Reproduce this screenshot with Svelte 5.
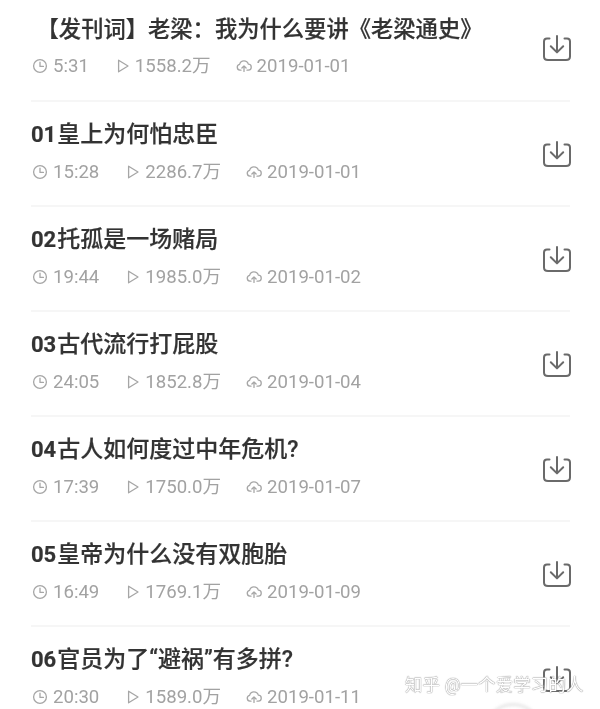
<script>
  const rows = [
    { num: '', title: ' 【发刊词】老梁：我为什么要讲《老梁通史》', dur: '5:31', plays: '1558.2万', date: '2019-01-01', first: true },
    { num: '01', title: '皇上为何怕忠臣', dur: '15:28', plays: '2286.7万', date: '2019-01-01' },
    { num: '02', title: '托孤是一场赌局', dur: '19:44', plays: '1985.0万', date: '2019-01-02' },
    { num: '03', title: '古代流行打屁股', dur: '24:05', plays: '1852.8万', date: '2019-01-04' },
    { num: '04', title: '古人如何度过中年危机?', dur: '17:39', plays: '1750.0万', date: '2019-01-07' },
    { num: '05', title: '皇帝为什么没有双胞胎', dur: '16:49', plays: '1769.1万', date: '2019-01-09' },
    { num: '06', title: '官员为了“避祸”有多拼?', dur: '20:30', plays: '1589.0万', date: '2019-01-11' }
  ];
</script>

<main class="list">
  {#each rows as r}
    <section class="row">
      <div class="text">
        <h2 class:first={r.first}>{#if r.num}<span class="num">{r.num}</span>{/if}{r.title}</h2>
        <div class="meta">
          <span class="item">
            <svg viewBox="0 0 16 16" width="16" height="16"><circle cx="8" cy="8" r="6.4"/><path d="M8 4.2V8.4H11.4"/></svg>
            {r.dur}
          </span>
          <span class="item plays">
            <svg viewBox="0 0 16 16" width="16" height="16"><path d="M3.6 2.2L13 8L3.6 13.8Z"/></svg>
            {r.plays}
          </span>
          <span class="item date">
            <svg viewBox="0 0 16 16" width="16" height="16"><path d="M5 12.2H3.9A3 3 0 0 1 3.6 6.3A4.5 4.5 0 0 1 12.3 6.2A3 3 0 0 1 12.2 12.2H11M8 13.4V8M5.9 10L8 7.9L10.1 10"/></svg>
            {r.date}
          </span>
        </div>
      </div>
      <svg class="dl" viewBox="0 0 28 28" width="28" height="28"><path d="M6.5 3.5H4Q1 3.5 1 6.5V21.5Q1 25 5 25H23Q27 25 27 21.5V6.5Q27 3.5 24 3.5H21.5"/><path d="M14 1V17M7.8 11.2L14 17.4L20.2 11.2"/></svg>
    </section>
  {/each}
  <div class="mark">知乎 @一个爱学习的人</div>
  <div class="arc"></div>
</main>

<style>
  :global(body) { background: #fff; overflow: hidden; }
  .list {
    position: relative;
    height: 709px;
    overflow: hidden;
    padding: 0 30px 0 31px;
    box-sizing: border-box;
    font-family: "Roboto", "Noto Sans CJK SC", sans-serif;
    filter: blur(0.35px);
  }
  .row {
    height: 105px;
    box-sizing: border-box;
    display: flex;
    align-items: flex-start;
    justify-content: space-between;
    border-bottom: 2px solid #f6f6f6;
  }
  .row:first-child { height: 101.5px; }
  .row:first-child .text { padding-top: 14px; }
  .row:first-child .dl { margin-top: 35px; }
  .text { padding-top: 18.5px; }
  h2 {
    margin: 0;
    font-size: 23px;
    line-height: 30px;
    font-weight: 500;
    color: #333;
    white-space: pre;
    -webkit-text-stroke: 0.2px #333;
  }
  h2.first { font-size: 22.3px; }
  .num { font-size: 22px; font-weight: 700; margin-right: 1px; }
  .meta {
    display: flex;
    margin-top: 9px;
    margin-left: 1px;
    font-size: 18.6px;
    line-height: 26px;
    color: #a2a2a2;
    gap: 26px;
  }
  .item { display: flex; align-items: center; gap: 5px; }
  .item.plays { gap: 4px; }
  .item.date { margin-left: -1px; }
  .item svg {
    flex: none;
    fill: none;
    stroke: #a6a6a6;
    stroke-width: 1.3;
    stroke-linejoin: round;
    stroke-linecap: round;
  }
  .dl {
    margin-top: 39.5px;
    margin-right: -1px;
    flex: none;
    fill: none;
    stroke: #6a6a6a;
    stroke-width: 2;
    stroke-linecap: round;
    stroke-linejoin: round;
  }
  .mark {
    position: absolute;
    left: 405px;
    top: 673px;
    font-size: 17.5px;
    line-height: 24px;
    color: #fff;
    letter-spacing: 0.1px;
    white-space: nowrap;
    text-shadow: 0 0 1px #777, 0 0 1px #999;
  }
  .arc {
    position: absolute;
    left: 483px;
    top: 703px;
    width: 54px;
    height: 54px;
    border-radius: 50%;
    border: 3px solid #e8e8e8;
    filter: blur(1.5px);
  }
</style>
